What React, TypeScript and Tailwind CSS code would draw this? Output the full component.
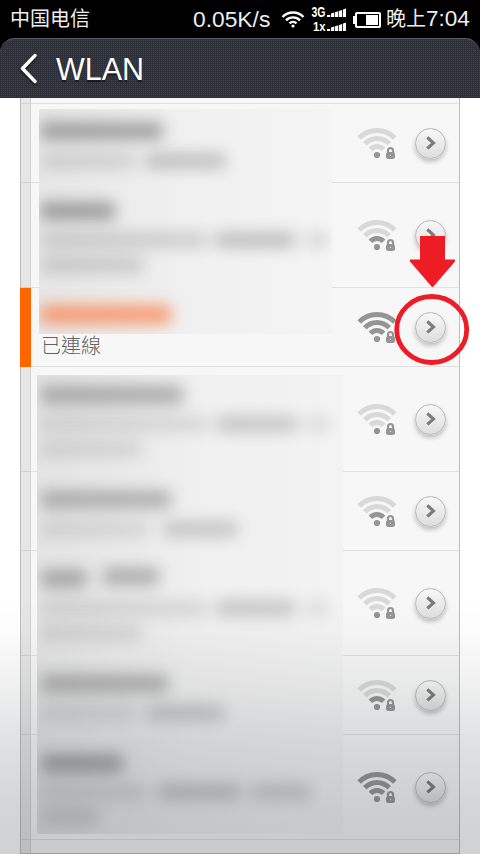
type Row = { level: number; tall: boolean; connected?: boolean };
type Smudge = { x: number; y: number; w: number; h: number; o: number; orange?: boolean };

const rows: Row[] = [
  { level: 0, tall: false },
  { level: 1, tall: true },
  { level: 3, tall: false, connected: true },
  { level: 0, tall: true },
  { level: 1, tall: false },
  { level: 0, tall: true },
  { level: 1, tall: false },
  { level: 3, tall: true },
];

const upper: Smudge[] = [
  { x: 0, y: 13, w: 125, h: 18, o: 0.4 },
  { x: 2, y: 44, w: 95, h: 16, o: 0.15 },
  { x: 105, y: 44, w: 83, h: 16, o: 0.25 },
  { x: 0, y: 93, w: 77, h: 18, o: 0.42 },
  { x: 2, y: 123, w: 166, h: 16, o: 0.18 },
  { x: 174, y: 123, w: 84, h: 16, o: 0.26 },
  { x: 268, y: 123, w: 20, h: 16, o: 0.16 },
  { x: 2, y: 148, w: 104, h: 16, o: 0.19 },
  { x: 0, y: 196, w: 133, h: 19, o: 0.62, orange: true },
];

const lower: Smudge[] = [
  { x: 3, y: 10, w: 144, h: 20, o: 0.32 },
  { x: 3, y: 41, w: 168, h: 16, o: 0.13 },
  { x: 178, y: 41, w: 84, h: 16, o: 0.22 },
  { x: 270, y: 41, w: 22, h: 16, o: 0.13 },
  { x: 3, y: 66, w: 103, h: 16, o: 0.13 },
  { x: 3, y: 115, w: 132, h: 19, o: 0.31 },
  { x: 3, y: 146, w: 110, h: 16, o: 0.12 },
  { x: 125, y: 146, w: 77, h: 16, o: 0.22 },
  { x: 3, y: 194, w: 48, h: 19, o: 0.34 },
  { x: 65, y: 192, w: 58, h: 19, o: 0.31 },
  { x: 3, y: 225, w: 168, h: 16, o: 0.13 },
  { x: 178, y: 225, w: 82, h: 16, o: 0.22 },
  { x: 270, y: 225, w: 20, h: 16, o: 0.13 },
  { x: 3, y: 250, w: 103, h: 16, o: 0.13 },
  { x: 3, y: 299, w: 129, h: 19, o: 0.31 },
  { x: 3, y: 330, w: 98, h: 16, o: 0.12 },
  { x: 108, y: 330, w: 80, h: 16, o: 0.22 },
  { x: 3, y: 379, w: 84, h: 19, o: 0.38 },
  { x: 3, y: 409, w: 107, h: 16, o: 0.13 },
  { x: 120, y: 409, w: 85, h: 16, o: 0.23 },
  { x: 213, y: 409, w: 62, h: 16, o: 0.19 },
  { x: 3, y: 434, w: 60, h: 16, o: 0.16 },
];

function Smudges({ items }: { items: Smudge[] }) {
  return (
    <>
      {items.map((s, i) => (
        <div
          key={i}
          className={`absolute rounded-lg blur-[7.5px] ${s.orange ? "bg-[#ff6a2a]" : "bg-[#303030]"}`}
          style={{ left: s.x, top: s.y, width: s.w, height: s.h, opacity: s.o }}
        />
      ))}
    </>
  );
}

function WifiSignal({ level }: { level: number }) {
  const tone = (n: number) => (level >= n ? "#959595" : "#d9d9d9");
  return (
    <svg width="42" height="34" viewBox="0 0 42 34" fill="none" strokeWidth="5" className="shrink-0">
      <path d="M3.2 12.1A24.7 24.7 0 0 1 38.800 12.100" stroke={tone(3)} />
      <path d="M8.800 17.700A16.700 16.700 0 0 1 33.200 17.700" stroke={tone(2)} />
      <path d="M14.500 23.300A8.700 8.700 0 0 1 27.500 23.300" stroke={tone(1)} />
      <circle cx="21" cy="29" r="3.100" fill="#959595" />
      <rect x="29.500" y="20" width="10" height="13" rx="4" fill="#f7f7f7" />
      <path d="M32 27v-2.400a2.500 2.600 0 0 1 5 0V27" stroke="#959595" strokeWidth="2.200" />
      <rect x="30" y="26" width="9" height="7" rx="2.500" fill="#959595" />
      <rect x="34" y="29" width="1" height="1" fill="#f2f2f2" />
    </svg>
  );
}

function DetailButton() {
  return (
    <div className="flex h-[31px] w-[31px] shrink-0 items-center justify-center rounded-full border border-[#b8b8b8] bg-linear-to-b from-[#f8f8f8] to-[#dedede] shadow-[0_3px_4px_rgba(0,0,0,0.22)]">
      <svg width="31" height="31" viewBox="0 0 31 31" fill="none" strokeWidth="3.1" className="shrink-0">
        <path d="M12.300 10.300l6.200 5.500-6.200 5.500" stroke="#ffffff" />
        <path d="M12.300 9.500l6.200 5.500-6.200 5.500" stroke="#7c7c7c" />
      </svg>
    </div>
  );
}

function NetworkRow({ row }: { row: Row }) {
  return (
    <div className={`flex ${row.tall ? "h-[105px]" : "h-[79px]"}`}>
      <div
        className={
          row.connected
            ? "-ml-px w-[11px] bg-[#ff6600]"
            : "w-[10px] border-b border-r border-[#d2d2d2] bg-[#e6e6e6]"
        }
      />
      <div className="flex flex-1 items-center border-b border-[#e0e0e0]">
        <div className="flex-1 self-end pb-[8px] pl-[10px] text-[20px] leading-6 font-light text-[#626262]">
          {row.connected ? "已連線" : null}
        </div>
        <WifiSignal level={row.level} />
        <div className="w-[17px]" />
        <DetailButton />
        <div className="w-[13px]" />
      </div>
    </div>
  );
}

function StatusBar() {
  return (
    <div className="flex h-[38px] items-center bg-black pl-[10px] text-[20px] leading-[38px] text-[#eeeeee]">
      <span className="w-[183px]">中国电信</span>
      <span className="w-[88px] text-[22.8px] whitespace-nowrap">0.05K/s</span>
      <svg width="100" height="38" viewBox="281 0 100 38" className="shrink-0" fill="none">
        <g stroke="#fff" strokeWidth="2.4">
          <path d="M282.5 17a14.5 14.5 0 0 1 21 0" />
          <path d="M286 20.3a9.8 9.8 0 0 1 14 0" />
          <path d="M289.5 23.4a5.2 5.2 0 0 1 7 0" />
        </g>
        <circle cx="293" cy="26" r="1.6" fill="#fff" />
        <g fill="#fff">
          <text x="311.5" y="17" textLength="14" lengthAdjust="spacingAndGlyphs" className="text-[14px] font-bold">3G</text>
          <text x="313" y="31" textLength="12.5" lengthAdjust="spacingAndGlyphs" className="text-[13.500px] font-bold">1x</text>
          {[0, 14].map((dy) => (
            <path key={dy} transform={`translate(0 ${dy})`} d="M327 15h3.200v2H327zM331 13.500l3.300-1V17H331zM335 12.300l3.300-1V17H335zM339 11l3.200-1V17H339zM343 9.600l3-1V17h-3z" />
          ))}
          <rect x="353" y="16" width="2.5" height="8" />
          <rect x="366" y="15" width="12" height="10" />
        </g>
        <rect x="356" y="13" width="24" height="14" rx="0.7" stroke="#fff" strokeWidth="2" />
      </svg>
      <span className="ml-[5px] flex whitespace-nowrap">
        晚上<span className="text-[22.5px]">7:04</span>
      </span>
    </div>
  );
}

export default function App() {
  return (
    <div className="relative flex h-[854px] w-[480px] flex-col overflow-hidden bg-white font-['Liberation_Sans','Noto_Sans_CJK_TC',sans-serif]">
      <StatusBar />
      <div className="bg-black">
        <header className="flex h-[60px] items-center rounded-t-[15px] border-t border-[#585b61] bg-[#3c3f48] bg-[linear-gradient(90deg,#2e313a_50%,transparent_50%),linear-gradient(#2e313a_50%,transparent_50%)] bg-size-[2px_2px] pl-[20px]">
          <svg width="18" height="32" viewBox="0 0 18 32" fill="none" stroke="#fff" strokeWidth="3.4" strokeLinecap="round" strokeLinejoin="round" className="drop-shadow-[0_2px_1px_rgba(0,0,0,0.5)]">
            <path d="M15 2.5L2.5 15.5 15 28.5" />
          </svg>
          <h1 className="pt-px pl-[18px] text-[30.5px] leading-none text-white [text-shadow:0_2px_1px_rgba(0,0,0,0.5)]">WLAN</h1>
        </header>
      </div>

      <main className="relative mx-[20px] flex flex-1 flex-col border-x border-b border-[#bdbdbd] bg-[#f7f7f7]">
        <div className="flex h-[6px]">
          <div className="w-[10px] border-r border-b border-[#d2d2d2] bg-[#e6e6e6]" />
          <div className="flex-1 border-b border-[#e0e0e0]" />
        </div>
        {rows.map((row, i) => (
          <NetworkRow key={i} row={row} />
        ))}
        <div className="w-[10px] flex-1 border-r border-[#d2d2d2] bg-[#e6e6e6]" />

        <div className="absolute top-[11px] left-[18px] h-[225px] w-[293px] overflow-hidden bg-linear-to-r from-[#e6e6e6] via-[#f0f0f0] to-[#f4f4f4]">
          <Smudges items={upper} />
        </div>
        <div className="absolute top-[277px] left-[16px] h-[459px] w-[306px] overflow-hidden bg-linear-to-r from-[#e3e3e3] via-[#efefef] to-[#f3f3f3]">
          <Smudges items={lower} />
        </div>
      </main>

      <div className="pointer-events-none absolute inset-x-0 bottom-0 h-[254px] bg-[linear-gradient(to_bottom,rgba(40,46,54,0)_0%,rgba(40,46,48,0.015)_12%,rgba(40,46,50,0.065)_32%,rgba(40,46,56,0.14)_55%,rgba(40,44,50,0.2)_82%,rgba(40,44,48,0.22)_100%)]" />

      <svg className="absolute top-[230px] left-[390px]" width="84" height="140" viewBox="390 230 84 140">
        <path d="M420 236h25v23.5h10v2L433 287h-1l-22-25.500v-2h10z" fill="#ee1c25" />
        <ellipse cx="431.700" cy="329.500" rx="35" ry="33" fill="none" stroke="#ee1c25" strokeWidth="4.800" />
      </svg>
    </div>
  );
}
